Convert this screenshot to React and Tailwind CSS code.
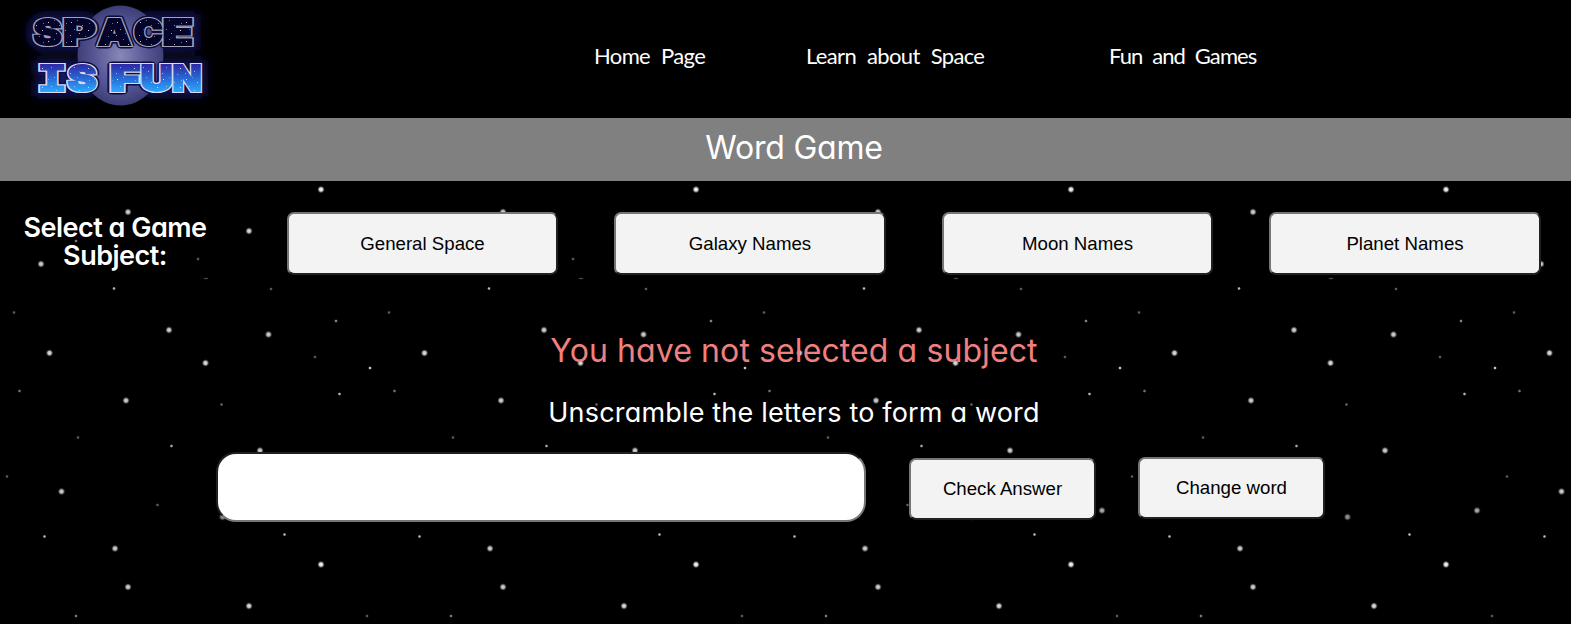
const bigStars = [
  [321, 189.5, 1], [128, 212, 0.85], [249, 231, 0.9], [41, 264, 0.85], [169, 330, 0.85],
  [268.5, 334.5, 0.85], [49.5, 353, 0.9], [205.5, 363, 0.9], [126, 25.5, 0.85],
  [61.5, 116.5, 0.85], [115, 173.5, 0.85], [260, 75.5, 0.85], [222.5, 142, 0.6], [352, 135.5, 0.7],
];
const smallStars = [
  [370, 368, 0.9], [76, 241, 0.55], [367, 241, 0.4], [198, 259, 0.4], [271, 289, 0.4],
  [114, 288.5, 0.8], [14, 312.5, 0.4], [336, 321, 0.6], [315, 357, 0.4], [171.5, 71, 0.75],
  [339.5, 19, 0.8], [44.5, 161.5, 0.75], [284.5, 159.5, 0.75], [19.5, 16, 0.5],
  [78, 62.5, 0.4], [221.5, 29.5, 0.4], [7, 101.5, 0.4], [157.5, 130, 0.4],
];

function StarField() {
  return (
    <svg className="absolute inset-0 h-full w-full" aria-hidden="true">
      <defs>
        <radialGradient id="star">
          <stop offset="0" stopColor="#fff" />
          <stop offset="0.45" stopColor="#e8e8e8" stopOpacity="0.9" />
          <stop offset="1" stopColor="#555" stopOpacity="0" />
        </radialGradient>
        <pattern id="sky" width="375" height="375" patternUnits="userSpaceOnUse">
          {bigStars.map(([x, y, o]) => (
            <circle key={x} cx={x} cy={y} r="3.9" fill="url(#star)" opacity={o} />
          ))}
          {smallStars.map(([x, y, o]) => (
            <circle key={x} cx={x} cy={y} r="2" fill="url(#star)" opacity={o} />
          ))}
          <ellipse cx="206" cy="278.5" rx="2.5" ry="0.8" fill="#444" />
        </pattern>
      </defs>
      <rect width="100%" height="100%" fill="url(#sky)" />
    </svg>
  );
}

const topLetters = [['S', 33.5, 28], ['P', 63, 32.5], ['A', 98, 33], ['C', 134, 28.5], ['E', 162.5, 30.5]];
const bottomLetters = [['I', 37, 30], ['S', 67.5, 29], ['F', 110, 30], ['U', 140.5, 32], ['N', 172.5, 29]];

function Letters({ items, y, ...rest }) {
  return (
    <g {...rest}>
      {items.map(([c, x, w]) => (
        <text
          key={c}
          x={x}
          y={y}
          textLength={w}
          lengthAdjust="spacingAndGlyphs"
          fontSize="35.5"
          fontWeight="900"
          fontFamily={c === 'I' ? '"DejaVu Sans Mono", monospace' : 'Inter, sans-serif'}
        >
          {c}
        </text>
      ))}
    </g>
  );
}

function Logo() {
  return (
    <svg className="block h-[112px] w-[240px]" viewBox="0 0 240 112" role="img">
      <defs>
        <radialGradient id="planet" cx="0.5" cy="0.5" r="0.55">
          <stop offset="0" stopColor="#9494c4" />
          <stop offset="0.5" stopColor="#6262a4" />
          <stop offset="1" stopColor="#3c3c78" />
        </radialGradient>
        <linearGradient id="blue" x1="0" y1="64" x2="0" y2="92" gradientUnits="userSpaceOnUse">
          <stop offset="0" stopColor="#2f28a4" />
          <stop offset="0.5" stopColor="#2868d2" />
          <stop offset="1" stopColor="#2baaff" />
        </linearGradient>
        <filter id="glow" x="-20%" y="-60%" width="140%" height="220%">
          <feGaussianBlur stdDeviation="5" />
        </filter>
        <pattern id="specks" width="23" height="19" patternUnits="userSpaceOnUse">
          <g fill="#dfe6ff">
            <rect x="2" y="3" width="1" height="1" opacity=".9" />
            <rect x="8" y="1" width="1" height="1" opacity=".5" />
            <rect x="13" y="6" width="1" height="1" opacity=".8" />
            <rect x="5" y="10" width="1" height="1" opacity=".6" />
            <rect x="19" y="11" width="1" height="1" opacity=".9" />
            <rect x="10" y="14" width="1" height="1" opacity=".7" />
            <rect x="16" y="17" width="1" height="1" opacity=".5" />
            <rect x="20" y="4" width="1" height="1" opacity=".5" />
            <rect x="1" y="16" width="1" height="1" opacity=".7" />
          </g>
        </pattern>
      </defs>
      <g filter="url(#glow)" fill="#191968" stroke="#191968" strokeWidth="10">
        <Letters items={topLetters} y={45} />
        <Letters items={bottomLetters} y={91} />
      </g>
      <ellipse cx="120.5" cy="55.5" rx="43" ry="50" fill="url(#planet)" opacity=".92" />
      <g stroke="#0c0c3c" strokeWidth="7" strokeLinejoin="round" fill="#0c0c3c">
        <Letters items={topLetters} y={45} />
        <Letters items={bottomLetters} y={91} />
      </g>
      <Letters items={topLetters} y={45} stroke="#a4a4b4" strokeWidth="4.2" />
      <Letters items={bottomLetters} y={91} stroke="#dcdcf0" strokeWidth="4.2" />
      <Letters items={topLetters} y={45} fill="#05052c" stroke="#05052c" strokeWidth="1.8" />
      <Letters items={bottomLetters} y={91} fill="url(#blue)" stroke="url(#blue)" strokeWidth="1.8" />
      <g aria-hidden="true">
        <Letters items={topLetters} y={45} fill="url(#specks)" />
        <Letters items={bottomLetters} y={91} fill="url(#specks)" />
      </g>
    </svg>
  );
}

const round = "font-['Inter',sans-serif] [font-feature-settings:'cv11','ss03']";

function Button({ className, children }) {
  return (
    <button
      className={`box-border rounded-[7px] border-2 border-t-[#767676] border-l-[#767676] border-r-[#212121] border-b-[#212121] bg-[#f3f3f3] font-['Liberation_Sans',Arial,sans-serif] text-[18.67px] leading-none text-black ${className}`}
    >
      {children}
    </button>
  );
}

export default function App() {
  return (
    <div className="relative h-[624px] w-[1571px] overflow-hidden bg-black text-white">
      <StarField />
      <div className="relative flex flex-col">
        <header className="flex h-[118px] items-start bg-black">
          <Logo />
          <nav className="flex pt-[42px] pl-[354px] font-['Lato',sans-serif] text-[22px] leading-7 tracking-[-0.65px] whitespace-nowrap [word-spacing:6px]">
            <a className="w-[212px]">Home Page</a>
            <a className="w-[303px]">Learn about Space</a>
            <a className="tracking-[-0.9px] [word-spacing:5px]">Fun and Games</a>
          </nav>
        </header>
        <h1 className={`flex h-[63px] justify-center bg-[#808080] pt-[12px] pl-[17px] text-[32px] leading-9 font-[380] tracking-[-0.2px] ${round}`}>
          Word Game
        </h1>
        <section className="flex h-[94px] items-start pt-[31px]">
          <h2 className={`w-[230px] pt-[2px] text-center text-[27px] leading-7 font-semibold tracking-[-0.5px] ${round}`}>
            Select a Game
            <br />
            Subject:
          </h2>
          <div className="flex pl-[57px]">
            <Button className="h-[63px] w-[271px] pt-px">General Space</Button>
            <Button className="ml-[56px] h-[63px] w-[272px] pt-px">Galaxy Names</Button>
            <Button className="ml-[56px] h-[63px] w-[271px] pt-px">Moon Names</Button>
            <Button className="ml-[56px] h-[63px] w-[272px] pt-px">Planet Names</Button>
          </div>
        </section>
        <p className={`flex h-[61px] items-start justify-center pt-[58px] pl-[17px] text-[32px] leading-[36px] font-normal tracking-[0.1px] whitespace-nowrap text-[#f08080] ${round}`}>
          You have not selected a subject
        </p>
        <p className={`mt-[59px] flex h-[36px] justify-center pl-[17px] text-[27px] leading-[36px] tracking-[0.18px] whitespace-nowrap ${round}`}>
          Unscramble the letters to form a word
        </p>
        <section className="mt-[21px] flex pl-[216px]">
          <input
            aria-label="Answer"
            className="h-[70px] w-[650px] rounded-[20px] border-2 border-t-[#212121] border-l-[#212121] border-r-[#767676] border-b-[#767676] bg-white"
          />
          <Button className="mt-[6px] ml-[43px] h-[62px] w-[187px]">Check Answer</Button>
          <Button className="mt-[5px] ml-[42px] h-[62px] w-[187px]">Change word</Button>
        </section>
      </div>
    </div>
  );
}
